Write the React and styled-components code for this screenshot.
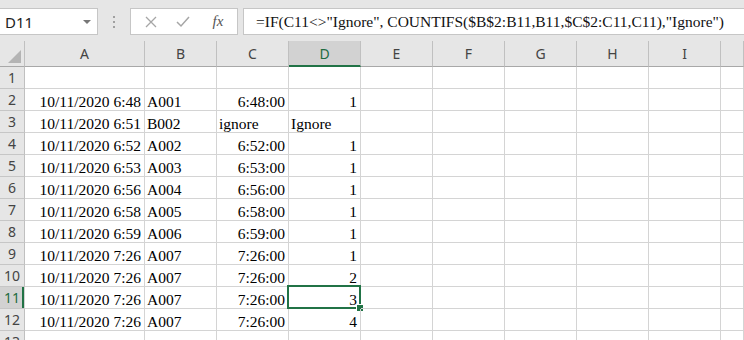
import React from "react";
import styled, { createGlobalStyle } from "styled-components";

const GlobalStyle = createGlobalStyle`
  html, body { margin: 0; padding: 0; background: #fff; overflow: hidden; }
  body { width: 744px; height: 340px; }
`;

const columns = ["A", "B", "C", "D", "E", "F", "G", "H", "I", ""];

const rows = [
  [],
  ["10/11/2020 6:48", "A001", "6:48:00", "1"],
  ["10/11/2020 6:51", "B002", "ignore", "Ignore"],
  ["10/11/2020 6:52", "A002", "6:52:00", "1"],
  ["10/11/2020 6:53", "A003", "6:53:00", "1"],
  ["10/11/2020 6:56", "A004", "6:56:00", "1"],
  ["10/11/2020 6:58", "A005", "6:58:00", "1"],
  ["10/11/2020 6:59", "A006", "6:59:00", "1"],
  ["10/11/2020 7:26", "A007", "7:26:00", "1"],
  ["10/11/2020 7:26", "A007", "7:26:00", "2"],
  ["10/11/2020 7:26", "A007", "7:26:00", "3"],
  ["10/11/2020 7:26", "A007", "7:26:00", "4"],
  [],
];

const Page = styled.div`
  width: 744px;
  height: 340px;
  overflow: hidden;
  display: flex;
  flex-direction: column;
`;

const Toolbar = styled.div`
  height: 41px;
  flex: none;
  background: #e6e6e6;
  display: flex;
  align-items: flex-start;
  padding-top: 8px;
  box-sizing: border-box;
`;

const Box = styled.div`
  height: 27px;
  box-sizing: border-box;
  background: #fff;
  border: 1px solid #c6c6c6;
  display: flex;
  align-items: center;
`;

const NameBox = styled(Box)`
  width: 98px;
  border-left: none;
  padding: 0 0 0 5px;
  justify-content: space-between;
  font-family: "Noto Sans", "Liberation Sans", sans-serif;
  font-size: 15px;
  color: #222;
`;

const Caret = styled.span`
  width: 0;
  height: 0;
  margin-right: 6px;
  border-left: 4px solid transparent;
  border-right: 4px solid transparent;
  border-top: 4px solid #777;
`;

const Grip = styled.div`
  width: 32px;
  height: 27px;
  display: flex;
  flex-direction: column;
  align-items: center;
  justify-content: center;
  gap: 3px;
  span {
    width: 2px;
    height: 2px;
    background: #a0a0a0;
  }
`;

const ButtonBox = styled(Box)`
  width: 108px;
  justify-content: space-around;
  padding: 0 4px;
  color: #a6a6a6;
`;

const Fx = styled.span`
  font-family: "Liberation Serif", serif;
  font-style: italic;
  font-size: 15px;
  color: #555;
  margin-left: 4px;
`;

const FormulaBox = styled(Box)`
  flex: 1;
  margin-left: 5px;
  border-right: none;
  padding-left: 12px;
  font-family: "Liberation Serif", serif;
  font-size: 15.5px;
  color: #111;
  white-space: nowrap;
  overflow: hidden;
`;

const Sheet = styled.div`
  display: grid;
  grid-template-columns: 25px 120px repeat(8, 72px) 1fr;
  grid-auto-rows: 22px;
  grid-template-rows: 26px;
`;

const HeadCell = styled.div`
  box-sizing: border-box;
  background: ${(p) => (p.$active ? "#d2d2d2" : "#e6e6e6")};
  border-right: 1px solid ${(p) => (p.$active && p.$row ? "transparent" : "#c0c0c0")};
  border-bottom: 1px solid #a8a8a8;
  ${(p) => p.$active && !p.$row && "border-bottom: 2px solid #217346;"}
  ${(p) => p.$active && p.$row && "box-shadow: inset -2px 0 0 #217346;"}
  ${(p) => p.$row && "border-bottom-color: #c6c6c6;"}
  display: flex;
  align-items: center;
  justify-content: center;
  font-family: "Noto Sans", "Liberation Sans", sans-serif;
  font-size: 14px;
  color: ${(p) => (p.$active ? "#1e6b40" : "#444")};
`;

const Corner = styled(HeadCell)`
  position: relative;
  &::after {
    content: "";
    position: absolute;
    right: 3px;
    bottom: 3px;
    border-left: 13px solid transparent;
    border-bottom: 13px solid #b4b4b4;
  }
`;

const Cell = styled.div`
  position: relative;
  box-sizing: border-box;
  border-right: 1px solid #d4d4d4;
  border-bottom: 1px solid #d4d4d4;
  display: flex;
  align-items: flex-end;
  justify-content: ${(p) => (p.$right ? "flex-end" : "flex-start")};
  padding: 0 3px 0 2px;
  font-family: "Liberation Serif", serif;
  font-size: 15.5px;
  line-height: 17px;
  color: #000;
  white-space: nowrap;
`;

const Selection = styled.div`
  position: absolute;
  left: -2px;
  top: -2px;
  right: -1px;
  bottom: -1px;
  border: 2px solid #217346;
  pointer-events: none;
  &::after {
    content: "";
    position: absolute;
    right: -5px;
    bottom: -5px;
    width: 6px;
    height: 6px;
    background: #217346;
    border: 1px solid #fff;
  }
`;

const isNumeric = (v, col) => col !== 1 && /^[\d:/ ]+$/.test(v || "");

export default function App() {
  return (
    <Page>
      <GlobalStyle />
      <Toolbar>
        <NameBox>
          D11
          <Caret />
        </NameBox>
        <Grip>
          <span />
          <span />
          <span />
        </Grip>
        <ButtonBox>
          <svg width="12" height="12" viewBox="0 0 12 12">
            <path d="M1 1 L11 11 M11 1 L1 11" stroke="#a6a6a6" strokeWidth="1.3" fill="none" />
          </svg>
          <svg width="14" height="12" viewBox="0 0 14 12">
            <path d="M1 6 L5 10 L13 1" stroke="#a6a6a6" strokeWidth="1.5" fill="none" />
          </svg>
          <Fx>fx</Fx>
        </ButtonBox>
        <FormulaBox>=IF(C11&lt;&gt;"Ignore", COUNTIFS($B$2:B11,B11,$C$2:C11,C11),"Ignore")</FormulaBox>
      </Toolbar>
      <Sheet>
        <Corner />
        {columns.map((c, i) => (
          <HeadCell key={i} $active={c === "D"}>
            {c}
          </HeadCell>
        ))}
        {rows.map((r, ri) => (
          <React.Fragment key={ri}>
            <HeadCell $row $active={ri === 10}>
              {ri + 1}
            </HeadCell>
            {columns.map((c, ci) => (
              <Cell key={ci} $right={isNumeric(r[ci], ci)}>
                {r[ci]}
                {ri === 10 && ci === 3 && <Selection />}
              </Cell>
            ))}
          </React.Fragment>
        ))}
      </Sheet>
    </Page>
  );
}
